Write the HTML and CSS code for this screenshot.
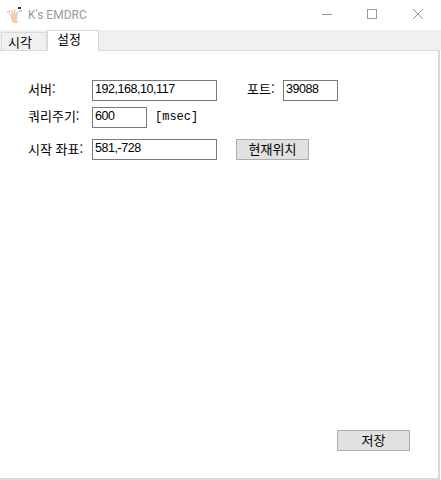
FILE: index.html
```html
<!DOCTYPE html>
<html lang="ko">
<head>
<meta charset="utf-8">
<title>K's EMDRC</title>
<link rel="stylesheet" href="styles.css">
</head>
<body>
<div class="window">
  <header class="titlebar">
    <svg class="app-icon" width="16" height="18" viewBox="0 0 16 18">
      <path d="M6 17 L4.5 14.5 L3.5 10.5 L1.5 8 L2.5 7.2 L4.8 9 L4 4 L5.3 3.6 L6.6 7.8 L7 3 L8.3 3 L8.5 8 L10.2 5 L11.3 5.6 L10.4 10 L10 14 L11 17 Z" fill="#f7cba8"/>
      <path d="M0 6.5 L3 5.5" stroke="#8fb0d8" stroke-width="1" fill="none"/>
      <path d="M12 5.5 L15 4.5" stroke="#8fb0d8" stroke-width="1" fill="none"/>
      <rect x="11" y="1" width="3" height="2" fill="#2b2b2b"/>
    </svg>
    <span class="title">K's EMDRC</span>
    <div class="controls">
      <svg class="ctl" width="46" height="30" viewBox="0 0 46 30"><path d="M19 14.5 H29" stroke="#999" fill="none"/></svg>
      <svg class="ctl" width="46" height="30" viewBox="0 0 46 30"><rect x="18.5" y="9.5" width="9" height="9" stroke="#999" fill="none"/></svg>
      <svg class="ctl" width="46" height="30" viewBox="0 0 46 30"><path d="M18 9 L28 19 M28 9 L18 19" stroke="#999" fill="none"/></svg>
    </div>
  </header>
  <nav class="tabs">
    <div class="tab">시각</div>
    <div class="tab tab-active">설정</div>
  </nav>
  <main class="panel">
    <div class="row">
      <label class="label">서버:</label>
      <div class="field field-long">192,168,10,117</div>
      <label class="label label-port">포트:</label>
      <div class="field field-short">39088</div>
    </div>
    <div class="row row-period">
      <label class="label">쿼리주기:</label>
      <div class="field field-short">600</div>
      <span class="unit">[msec]</span>
    </div>
    <div class="row row-start">
      <label class="label">시작 좌표:</label>
      <div class="field field-long">581,-728</div>
      <button class="btn btn-current">현재위치</button>
    </div>
    <div class="footer">
      <button class="btn">저장</button>
    </div>
  </main>
</div>
</body>
</html>
```
FILE: styles.css
```css
* { box-sizing: border-box; }
html, body { margin: 0; padding: 0; background: #fff; }
body { width: 441px; height: 480px; overflow: hidden; }
.window {
  width: 441px;
  height: 480px;
  display: flex;
  flex-direction: column;
  font-family: "Noto Sans CJK KR", "Liberation Sans", sans-serif;
  font-size: 13px;
  color: #000;
}
.titlebar {
  height: 30px;
  flex: none;
  display: flex;
  align-items: center;
  padding-left: 7px;
  background: #fff;
}
.app-icon { flex: none; margin-top: -1px; }
.title {
  margin-left: 5px;
  font-family: Roboto, sans-serif;
  font-size: 12px;
  color: #9a9a9a;
}
.controls { margin-left: auto; display: flex; }
.ctl { display: block; }
.tabs {
  height: 20px;
  flex: none;
  display: flex;
  align-items: flex-end;
  padding-left: 1px;
  background: #f0f0f0;
  position: relative;
  z-index: 1;
}
.tab {
  width: 46px;
  height: 18px;
  border: 1px solid #d9d9d9;
  border-bottom: 0;
  line-height: 17px;
  padding-left: 6px;
  background: #f0f0f0;
}
.tab-active {
  width: 52px;
  height: 21px;
  margin-bottom: -1px;
  background: #fff;
  padding-left: 9px;
  line-height: 15px;
}
.panel {
  flex: 1;
  display: flex;
  flex-direction: column;
  margin-right: 1px;
  padding: 29px 0 27px 28px;
  background: #fff;
  border: 1px solid #d9d9d9;
  border-left: 0;
  border-bottom-width: 2px;
  border-right-width: 2px;
  background-clip: padding-box;
}
.row { display: flex; align-items: flex-start; height: 21px; }
.row-period { margin-top: 6px; }
.row-start { margin-top: 11px; }
.label { width: 64px; flex: none; line-height: 17px; }
.row-start .label { line-height: 19px; }
.label-port { width: 36px; margin-left: 30px; }
.field {
  height: 21px;
  border: 1px solid #7a7a7a;
  padding-left: 2px;
  line-height: 16px;
  background: #fff;
  font-family: "Liberation Sans", sans-serif;
  font-size: 12.5px;
  letter-spacing: -0.45px;
}
.field-long { width: 125px; }
.field-short { width: 55px; }
.unit { margin-left: 8px; font-family: "Liberation Mono", monospace; font-size: 12px; line-height: 20px; }
.btn {
  width: 73px;
  height: 21px;
  padding: 0 0 2px;
  border: 1px solid #adadad;
  background: #e1e1e1;
  font: inherit;
  line-height: 17px;
  color: #000;
}
.btn-current { margin-left: 19px; }
.footer { margin-top: auto; display: flex; justify-content: flex-end; padding-right: 28px; }
```
